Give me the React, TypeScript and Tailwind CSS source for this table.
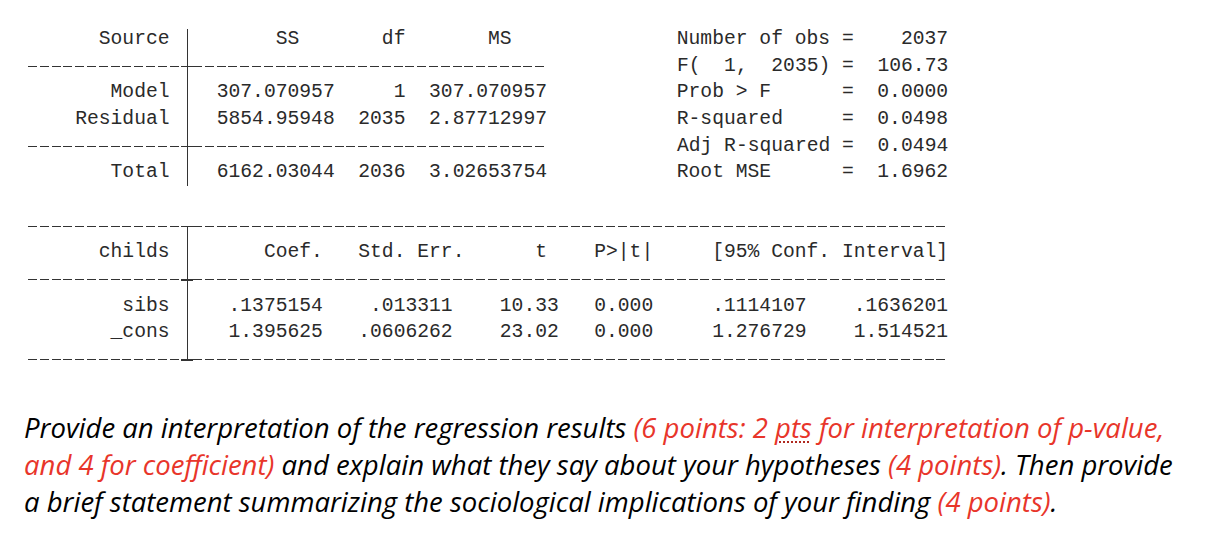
import React from "react";

type Line = { label?: string; rest?: string; kind: string };

const lines: Line[] = [
  { kind: "text", label: "      Source ", rest: "       SS       df       MS              Number of obs =    2037" },
  { kind: "rule", rest: "           F(  1,  2035) =  106.73" },
  { kind: "text", label: "       Model ", rest: "  307.070957     1  307.070957           Prob > F      =  0.0000" },
  { kind: "text", label: "    Residual ", rest: "  5854.95948  2035  2.87712997           R-squared     =  0.0498" },
  { kind: "rule", rest: "           Adj R-squared =  0.0494" },
  { kind: "text", label: "       Total ", rest: "  6162.03044  2036  3.02653754           Root MSE      =  1.6962" },
  { kind: "blank" },
  { kind: "full" },
  { kind: "text", label: "      childs ", rest: "      Coef.   Std. Err.      t    P>|t|     [95% Conf. Interval]" },
  { kind: "rule2" },
  { kind: "text", label: "        sibs ", rest: "   .1375154    .013311    10.33   0.000     .1114107    .1636201" },
  { kind: "text", label: "       _cons ", rest: "   1.395625   .0606262    23.02   0.000     1.276729    1.514521" },
  { kind: "full" },
];

function Dashes({ n }: { n: number }) {
  return (
    <span
      className="inline-block align-top h-[26.67px] bg-[repeating-linear-gradient(90deg,#333_0px,#333_9px,transparent_9px,transparent_11.8px)] bg-no-repeat [background-size:100%_1.3px] [background-position:0_13.5px]"
      style={{ width: `${n * 11.8}px` }}
    />
  );
}

function Bar({ cross, from, to }: { cross?: boolean; from: string; to: string }) {
  return (
    <span className="relative inline-block align-top w-[11.8px] h-[26.67px]">
      <span className={"absolute left-[5.5px] w-[1.3px] bg-[#333] " + from + " " + to} />
      {cross && <span className="absolute left-0 right-0 top-[13.5px] h-[1.3px] bg-[#333]" />}
    </span>
  );
}

export default function App() {
  return (
    <div className="w-[1214px] h-[552px] bg-white overflow-hidden">
      <div className="pl-[28px] pt-[26px] text-[19.67px] leading-[26.67px] text-[#2a2a2a] whitespace-pre [font-family:'Liberation_Mono',monospace]">
        {lines.map((l, i) => {
          const k = l.kind;
          if (k === "blank") return <div key={i} className="h-[26.67px]" />;
          if (k === "full")
            return (
              <div key={i} className="h-[26.67px] flex">
                <Dashes n={13} />
                <Bar cross from={i === 7 ? "top-[13.5px]" : "top-0"} to={i === 7 ? "bottom-0" : "bottom-[12px]"} />
                <Dashes n={64} />
              </div>
            );
          if (k === "rule" || k === "rule2")
            return (
              <div key={i} className="h-[26.67px] flex">
                <Dashes n={13} />
                <Bar cross from="top-0" to="bottom-0" />
                <Dashes n={k === "rule" ? 30 : 64} />
                {l.rest && <span>{l.rest}</span>}
              </div>
            );
          return (
            <div key={i} className="h-[26.67px] flex">
              <span>{l.label}</span>
              <Bar from={i === 0 ? "top-[3px]" : "top-0"} to={i === 5 ? "bottom-[0px]" : "bottom-0"} />
              <span>{l.rest}</span>
            </div>
          );
        })}
      </div>
      <div className="pl-[24px] mt-[36px] text-[27.5px] leading-[37px] italic text-black [font-family:'Open_Sans',sans-serif]">
        <div>
          Provide an interpretation of the regression results{" "}
          <span className="text-[#e8352a]">
            (6 points: 2{" "}
            <span className="underline decoration-dotted decoration-[#b02a20] decoration-2 underline-offset-4">pts</span>{" "}
            for interpretation of p-value,
          </span>
        </div>
        <div>
          <span className="text-[#e8352a]">and 4 for coefficient)</span> and explain what they say about your hypotheses{" "}
          <span className="text-[#e8352a]">(4 points)</span>. Then provide
        </div>
        <div>
          a brief statement summarizing the sociological implications of your finding{" "}
          <span className="text-[#e8352a]">(4 points)</span>.
        </div>
      </div>
    </div>
  );
}
